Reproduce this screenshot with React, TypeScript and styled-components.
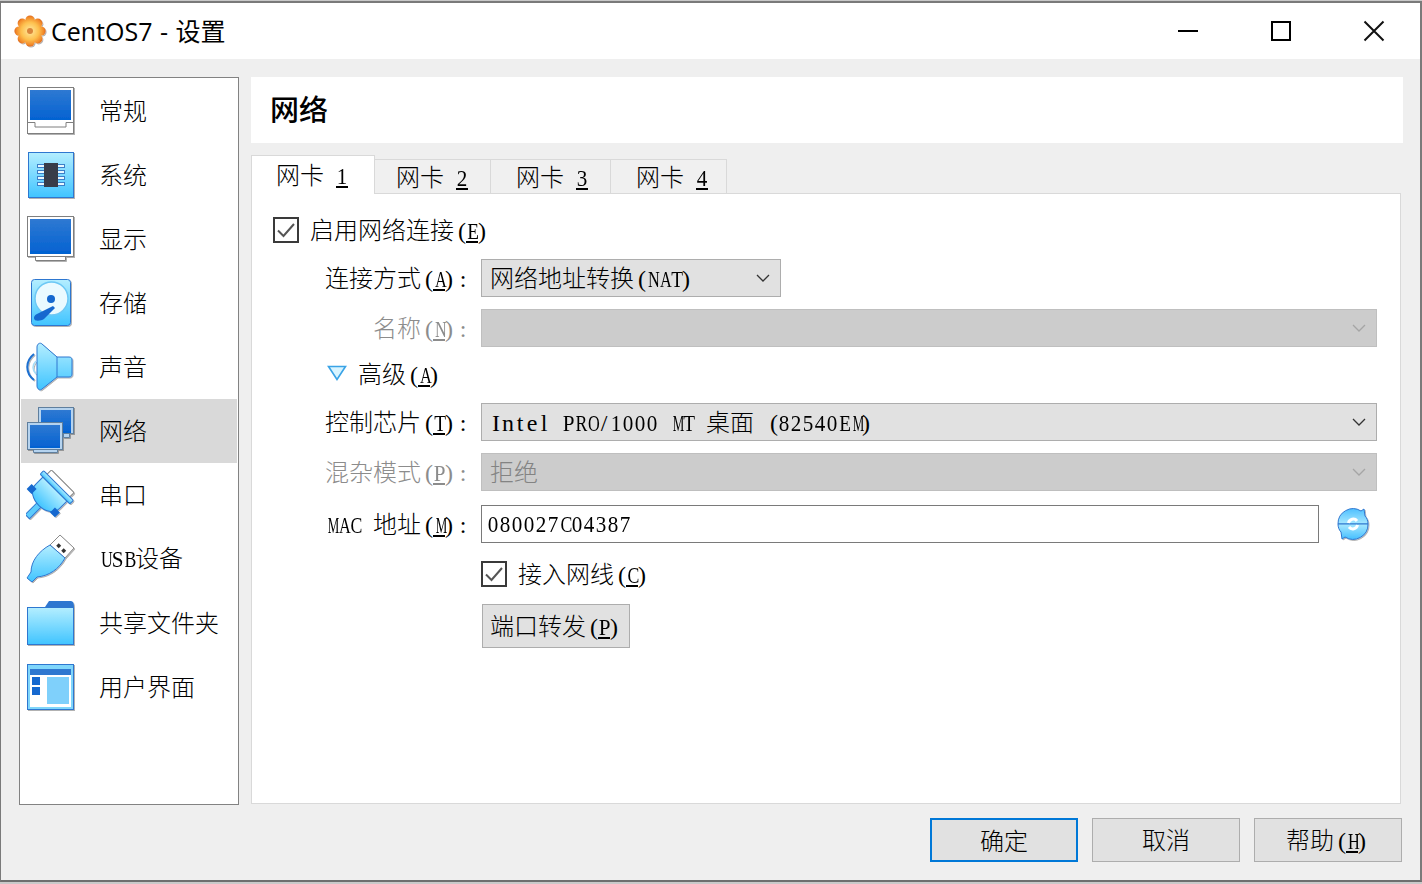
import React from 'react';
import styled, { createGlobalStyle } from 'styled-components';

const BLUE_DARK = '#2f77d0';

const GlobalStyle = createGlobalStyle`
  html, body {
    margin: 0;
    padding: 0;
    background: #c9c9c9;
  }
  body {
    padding-top: 1px;
    font-family: "Noto Sans CJK SC", "Liberation Sans", sans-serif;
    font-weight: 300;
    color: #000;
  }
`;

const Window = styled.div`
  width: 1422px;
  height: 881px;
  box-sizing: border-box;
  border-top: 2px solid #7a7a7a;
  border-left: 1px solid #7a7a7a;
  border-right: 2px solid #7a7a7a;
  border-bottom: 2px solid #6e6e6e;
  background: #efefef;
  display: flex;
  flex-direction: column;
  overflow: hidden;
`;

const TitleBar = styled.div`
  height: 56px;
  flex: none;
  background: #fff;
  display: flex;
  align-items: center;
  padding-left: 12px;
`;

const TitleText = styled.div`
  margin-left: 4px;
  font-size: 25px;
  font-weight: 400;
  word-spacing: 1px;
  font-family: "Open Sans", "Noto Sans CJK SC", sans-serif;
  line-height: 54px;
  flex: 1;
`;

const WinButton = styled.div`
  width: 93px;
  height: 56px;
  display: flex;
  align-items: center;
  justify-content: center;
`;

const Body = styled.div`
  flex: 1;
  min-height: 0;
  display: flex;
  padding: 18px 17px 0 18px;
  gap: 12px;
`;

const Sidebar = styled.div`
  width: 220px;
  height: 728px;
  flex: none;
  box-sizing: border-box;
  border: 1px solid #828282;
  background: #fff;
  padding: 1px;
  display: flex;
  flex-direction: column;
`;

const NavItem = styled.div<{ $active?: boolean }>`
  height: 64px;
  flex: none;
  display: flex;
  align-items: center;
  background: ${(p) => (p.$active ? '#d9d9d9' : 'transparent')};
`;

const NavIcon = styled.div`
  width: 78px;
  padding-left: 5px;
  box-sizing: border-box;
  display: flex;
  align-items: center;
  flex: none;
`;

const NavLabel = styled.div`
  font-size: 24px;
  line-height: 30px;
  margin-top: -2px;
  white-space: pre;
`;

const Main = styled.div`
  flex: 1;
  min-width: 0;
  display: flex;
  flex-direction: column;
`;

const Header = styled.div`
  height: 66px;
  flex: none;
  background: #fff;
  padding-left: 19px;
  font-size: 29px;
  font-weight: 500;
  line-height: 62px;
`;

const Tabs = styled.div`
  margin-top: 12px;
  height: 38px;
  flex: none;
  display: flex;
  align-items: flex-end;
  position: relative;
  z-index: 1;
`;

const Tab = styled.div<{ $active?: boolean; $width: number; $pad: number }>`
  box-sizing: border-box;
  width: ${(p) => p.$width}px;
  height: ${(p) => (p.$active ? '39px' : '34px')};
  margin-bottom: ${(p) => (p.$active ? '-1px' : '0')};
  border: 1px solid #d9d9d9;
  border-left-width: ${(p) => (p.$active ? '1px' : '0')};
  border-bottom-width: 0;
  background: ${(p) => (p.$active ? '#fff' : '#f0f0f0')};
  padding-left: ${(p) => p.$pad}px;
  font-size: 24px;
  line-height: ${(p) => (p.$active ? '35px' : '32px')};
  white-space: pre;
`;

const Panel = styled.div`
  width: 1150px;
  height: 611px;
  box-sizing: border-box;
  flex: none;
  background: #fff;
  border: 1px solid #d9d9d9;
  padding: 20px 0 0 21px;
`;

const Cell = styled.span<{ $sx: number; $align: string }>`
  display: inline-block;
  width: 12px;
  text-align: ${(p) => p.$align};
  font-family: "Liberation Serif", serif;
  font-size: 24px;
  white-space: pre;
  transform: scaleX(${(p) => p.$sx});
`;

const KeyBox = styled.span`
  display: inline-block;
  position: relative;
  line-height: 24px;
  &::after {
    content: '';
    position: absolute;
    left: 0;
    right: 0;
    bottom: 0;
    height: 2px;
    background: currentColor;
  }
`;

const CheckRow = styled.div`
  display: flex;
  align-items: center;
  height: 32px;
  gap: 11px;
  font-size: 24px;
`;

const RowText = styled.span`
  margin-top: -3px;
  white-space: pre;
`;

const CheckBox = styled.div`
  width: 26px;
  height: 26px;
  box-sizing: border-box;
  border: 2px solid #3a3a3a;
  display: flex;
  align-items: center;
  justify-content: center;
`;

const FormGrid = styled.div`
  margin-top: 13px;
  display: grid;
  grid-template-columns: 196px 838px 46px;
  column-gap: 12px;
`;

const FieldLabel = styled.div<{ $muted?: boolean }>`
  grid-column: 1;
  height: 38px;
  font-size: 24px;
  line-height: 35px;
  text-align: right;
  white-space: pre;
  color: ${(p) => (p.$muted ? '#8c8c8c' : '#000')};
`;

const Select = styled.div<{ $disabled?: boolean; $width?: number }>`
  grid-column: 2 / span 2;
  box-sizing: border-box;
  height: 38px;
  width: ${(p) => (p.$width ? `${p.$width}px` : '896px')};
  background: ${(p) => (p.$disabled ? '#cccccc' : '#e1e1e1')};
  border: 1px solid ${(p) => (p.$disabled ? '#bfbfbf' : '#adadad')};
  color: ${(p) => (p.$disabled ? '#838383' : '#000')};
  display: flex;
  align-items: center;
  justify-content: space-between;
  padding: 0 9px 0 8px;
  font-size: 24px;
  white-space: pre;
`;

const RowGap = styled.div<{ $h: number }>`
  grid-column: 1 / span 3;
  height: ${(p) => p.$h}px;
`;

const Advanced = styled.div`
  grid-column: 1 / span 3;
  height: 32px;
  display: flex;
  align-items: center;
  gap: 11px;
  padding-left: 54px;
  font-size: 24px;
`;

const MacInput = styled.div`
  grid-column: 2;
  box-sizing: border-box;
  height: 38px;
  border: 1px solid #7a7a7a;
  padding-left: 5px;
  display: flex;
  align-items: center;
`;

const MacAction = styled.div`
  grid-column: 3;
  display: flex;
  align-items: center;
  padding-left: 4px;
`;

const FieldSlot = styled.div`
  grid-column: 2 / span 2;
`;

const ForwardButton = styled.div`
  box-sizing: border-box;
  width: 148px;
  height: 44px;
  margin-left: 1px;
  background: #e1e1e1;
  border: 1px solid #adadad;
  font-size: 24px;
  line-height: 39px;
  padding-left: 7px;
  white-space: pre;
`;

const Footer = styled.div`
  flex: none;
  height: 76px;
  display: flex;
  justify-content: flex-end;
  gap: 14px;
  padding: 14px 18px 0 0;
  box-sizing: border-box;
`;

const FootButton = styled.div<{ $primary?: boolean }>`
  box-sizing: border-box;
  width: 148px;
  height: 44px;
  background: #e1e1e1;
  border: ${(p) => (p.$primary ? '2px solid #0078d7' : '1px solid #adadad')};
  font-size: 24px;
  line-height: 39px;
  text-align: center;
  white-space: pre;
`;

// Latin glyphs of the reference sit in half-width cells, so squeeze the wide capitals to fit
const SQUEEZE: Record<string, number> = {
  M: 0.54, A: 0.68, N: 0.68, T: 0.8, E: 0.8, P: 0.88, C: 0.74, H: 0.68, U: 0.68, S: 0.88, B: 0.74, R: 0.74, O: 0.68,
  '0': 0.88, '1': 0.88, '2': 0.88, '3': 0.88, '4': 0.88, '5': 0.88, '7': 0.88, '8': 0.88,
};

const cellAlign = (ch: string) => (ch === '(' ? 'right' : ch === ')' ? 'left' : 'center');

const Latin = ({ children }: { children: string }) => (
  <>
    {children.split('').map((ch, i) => (
      <Cell key={i} $sx={SQUEEZE[ch] ?? 1} $align={cellAlign(ch)}>{ch}</Cell>
    ))}
  </>
);

const Key = ({ children }: { children: string }) => (
  <KeyBox><Latin>{children}</Latin></KeyBox>
);

const Shortcut = ({ k }: { k: string }) => (
  <><Latin>(</Latin><Key>{k}</Key><Latin>)</Latin></>
);

const Defs = () => (
  <svg width="0" height="0" style={{ position: 'absolute' }}>
    <defs>
      <linearGradient id="sky" x1="0" y1="0" x2="0" y2="1">
        <stop offset="0" stopColor="#b4eeff" />
        <stop offset="1" stopColor="#40c4ff" />
      </linearGradient>
      <linearGradient id="deep" x1="0" y1="0" x2="0" y2="1">
        <stop offset="0" stopColor="#2f79d2" />
        <stop offset="1" stopColor="#0362d2" />
      </linearGradient>
      <linearGradient id="refreshTop" x1="0" y1="0" x2="0" y2="1">
        <stop offset="0" stopColor="#4fc0ff" />
        <stop offset="1" stopColor="#a8e8ff" />
      </linearGradient>
      <linearGradient id="refreshBottom" x1="0" y1="0" x2="0" y2="1">
        <stop offset="0" stopColor="#a8e8ff" />
        <stop offset="1" stopColor="#45bfff" />
      </linearGradient>
      <radialGradient id="gear" gradientUnits="userSpaceOnUse" cx="17" cy="17" r="16">
        <stop offset="0" stopColor="#ffe9a0" />
        <stop offset="0.55" stopColor="#fdc04e" />
        <stop offset="0.85" stopColor="#f28a2b" />
        <stop offset="1" stopColor="#d9621c" />
      </radialGradient>
      <filter id="soft" x="-10%" y="-10%" width="130%" height="130%">
        <feDropShadow dx="1" dy="1" stdDeviation="0.6" floodColor="#000" floodOpacity="0.3" />
      </filter>
    </defs>
  </svg>
);

const Ico = ({ children }: { children: React.ReactNode }) => (
  <svg width="50" height="50" viewBox="1 1 50 50">
    <g filter="url(#soft)">{children}</g>
  </svg>
);

const GeneralIcon = () => (
  <Ico>
    <rect x="2.5" y="2.5" width="46" height="46" fill="#fff" stroke="#7f7f7f" />
    <rect x="5" y="5" width="41" height="30" fill="url(#deep)" />
    <path d="M3 37.5h7v4.5h31v-4.5h7" fill="none" stroke="#7f7f7f" />
  </Ico>
);

const SystemIcon = () => (
  <Ico>
    <rect x="3.5" y="3.5" width="45" height="45" fill="url(#sky)" stroke={BLUE_DARK} />
    <g fill="#e9f8ff" stroke="#3a7fc8" strokeWidth="1">
      <rect x="12.5" y="15.5" width="27" height="3" />
      <rect x="12.5" y="21.5" width="27" height="3" />
      <rect x="12.5" y="27.5" width="27" height="3" />
      <rect x="12.5" y="33.5" width="27" height="3" />
    </g>
    <rect x="19" y="14" width="14" height="24" fill="#373d4a" />
  </Ico>
);

const DisplayIcon = () => (
  <Ico>
    <path d="M10.5 43v4.5h30V43" fill="#fff" stroke="#7f7f7f" />
    <rect x="2.5" y="3.5" width="46" height="40" fill="#fff" stroke="#7f7f7f" />
    <rect x="5" y="6" width="41" height="35" fill="url(#deep)" />
  </Ico>
);

const StorageIcon = () => (
  <Ico>
    <rect x="6.5" y="2.5" width="39" height="46" rx="3" fill="url(#sky)" stroke={BLUE_DARK} />
    <circle cx="26.5" cy="21.5" r="16.5" fill="#eafaff" stroke="#6cc8f5" strokeWidth="1.5" />
    <circle cx="26" cy="22" r="4" fill="#1268cf" />
    <path d="M9 41c0-2 1-3 3-4l16-8 2 2-11 11c-3 2-10 3-10-1z" fill="#1268cf" />
  </Ico>
);

const SoundIcon = () => (
  <Ico>
    <path d="M12 6c0-3 3-5 5-3l15 13h12c2 0 3 1 3 3v14c0 2-1 3-3 3H32L17 48c-2 2-5 0-5-3z" fill="url(#sky)" stroke={BLUE_DARK} />
    <path d="M32 16v20" stroke={BLUE_DARK} fill="none" />
    <path d="M9 13C0 20 0 32 9 39" fill="none" stroke="#1d6fd0" strokeWidth="2" />
    <path d="M11 20c-4 4-4 9 0 13" fill="none" stroke="#a5dcf7" strokeWidth="1.5" />
  </Ico>
);

const NetworkIcon = () => (
  <Ico>
    <path d="M38.5 28v4.5h6V28" fill="#b5d3ef" stroke="#5e7f9e" />
    <rect x="13.5" y="2.5" width="35" height="26" fill="#b5d3ef" stroke="#5e7f9e" />
    <rect x="16" y="5" width="30" height="23" fill="url(#deep)" />
    <path d="M8.5 44v3.5h24V44" fill="#b5d3ef" stroke="#5e7f9e" />
    <rect x="2.5" y="17.5" width="35" height="27" fill="#b5d3ef" stroke="#5e7f9e" />
    <rect x="5" y="20" width="30" height="23" fill="url(#deep)" />
  </Ico>
);

const SerialIcon = () => (
  <Ico>
    <g transform="translate(25 25) rotate(45)">
      <rect x="-16" y="-18" width="32" height="7" rx="1" fill="#fff" stroke="#8a8a8a" />
      <rect x="-3" y="12" width="6" height="20" fill="#5ccbfc" stroke={BLUE_DARK} />
      <path d="M-17-7H17V3C17 12 8 16 0 16S-17 12-17 3z" fill="url(#sky)" stroke={BLUE_DARK} />
      <rect x="-21" y="-12" width="42" height="5" rx="1" fill="url(#sky)" stroke={BLUE_DARK} />
      <rect x="-20" y="6" width="7" height="7" fill="#1268cf" />
      <rect x="13" y="6" width="7" height="7" fill="#1268cf" />
    </g>
  </Ico>
);

const UsbIcon = () => (
  <Ico>
    <path d="M35 2l14 13-9 10L25 12z" fill="#fff" stroke="#8a8a8a" />
    <rect x="32" y="11" width="3.5" height="3.5" fill="#333" transform="rotate(45 33.7 12.7)" />
    <rect x="37" y="16" width="3.5" height="3.5" fill="#333" transform="rotate(45 38.7 17.7)" />
    <path d="M25 12l15 13C34 36 24 43 12 44l-5 5-5-4 4-6C6 28 14 18 25 12z" fill="url(#sky)" stroke={BLUE_DARK} />
  </Ico>
);

const FolderIcon = () => (
  <Ico>
    <path d="M20 10l4-6h22c2 0 3 2 3 6z" fill={BLUE_DARK} />
    <rect x="2.5" y="10.5" width="46" height="37" fill="url(#sky)" stroke={BLUE_DARK} />
  </Ico>
);

const UiIcon = () => (
  <Ico>
    <rect x="2.5" y="3.5" width="46" height="45" fill="#7fd6fb" stroke={BLUE_DARK} />
    <rect x="5" y="8" width="41" height="38" fill="#fff" />
    <rect x="5" y="8" width="41" height="6" fill={BLUE_DARK} />
    <rect x="7" y="16" width="8" height="8" fill="#1268cf" />
    <rect x="7" y="26" width="8" height="8" fill="#1268cf" />
    <rect x="22" y="16" width="22" height="27" fill="#7fd0fb" />
  </Ico>
);

const GEAR_ANGLES = [0, 45, 90, 135, 180, 225, 270, 315];

const GearIcon = () => (
  <svg width="34" height="34" viewBox="0 0 34 34">
    <g filter="url(#soft)">
      <g fill="url(#gear)">
        <circle cx="17" cy="17" r="12" />
        {GEAR_ANGLES.map((a) => (
          <circle key={a} cx="17" cy="6" r="4.6" transform={`rotate(${a} 17 17)`} />
        ))}
      </g>
      <circle cx="17" cy="17" r="3" fill="#d9853a" />
    </g>
  </svg>
);

const Chevron = ({ color = '#333' }: { color?: string }) => (
  <svg width="16" height="16" viewBox="0 0 16 16">
    <path d="M2 5l6 6 6-6" fill="none" stroke={color} strokeWidth="1.3" />
  </svg>
);

const Tick = () => (
  <svg width="20" height="20" viewBox="0 0 20 20">
    <path d="M2 10.5l5.5 5.5L18 4" fill="none" stroke="#555" strokeWidth="2" />
  </svg>
);

const TriangleIcon = () => (
  <svg width="20" height="16" viewBox="0 0 20 16" style={{ marginBottom: 2 }}>
    <path d="M1.5 1.5h17L10 14.5z" fill="#d8f4ff" stroke="#3aa3e6" strokeWidth="1.6" />
  </svg>
);

const RefreshIcon = () => (
  <svg width="36" height="36" viewBox="0 0 36 36">
    <g filter="url(#soft)">
      <path d="M3 18A15 15 0 0 1 26 5l3-2 1 7c2 2 3 5 3 8z" fill="url(#refreshTop)" stroke={BLUE_DARK} />
      <path d="M33 18A15 15 0 0 1 10 31l-3 2-1-7c-2-2-3-5-3-8z" fill="url(#refreshBottom)" stroke={BLUE_DARK} />
      <path d="M13.5 17a4.8 4.8 0 0 1 8.5-2M22.5 19a4.8 4.8 0 0 1-8.5 2" fill="none" stroke="#fff" strokeWidth="3" />
    </g>
  </svg>
);

const navItems: { label: React.ReactNode; icon: React.ReactNode; active?: boolean }[] = [
  { label: '常规', icon: <GeneralIcon /> },
  { label: '系统', icon: <SystemIcon /> },
  { label: '显示', icon: <DisplayIcon /> },
  { label: '存储', icon: <StorageIcon /> },
  { label: '声音', icon: <SoundIcon /> },
  { label: '网络', icon: <NetworkIcon />, active: true },
  { label: '串口', icon: <SerialIcon /> },
  { label: <><Latin>USB</Latin>设备</>, icon: <UsbIcon /> },
  { label: '共享文件夹', icon: <FolderIcon /> },
  { label: '用户界面', icon: <UiIcon /> },
];

const tabs = [
  { key: '1', width: 124, pad: 24, active: true },
  { key: '2', width: 116, pad: 21 },
  { key: '3', width: 120, pad: 25 },
  { key: '4', width: 116, pad: 25 },
];

export default function App() {
  return (
    <>
      <GlobalStyle />
      <Defs />
      <Window>
        <TitleBar>
          <GearIcon />
          <TitleText>CentOS7 - 设置</TitleText>
          <WinButton>
            <svg width="22" height="22" viewBox="0 0 22 22"><path d="M1 11h20" stroke="#000" strokeWidth="2" /></svg>
          </WinButton>
          <WinButton>
            <svg width="22" height="22" viewBox="0 0 22 22"><rect x="2" y="2" width="18" height="18" fill="none" stroke="#000" strokeWidth="2" /></svg>
          </WinButton>
          <WinButton>
            <svg width="22" height="22" viewBox="0 0 22 22"><path d="M1.5 1.5l19 19M20.5 1.5l-19 19" stroke="#111" strokeWidth="2" /></svg>
          </WinButton>
        </TitleBar>
        <Body>
          <Sidebar>
            {navItems.map((item, i) => (
              <NavItem key={i} $active={item.active}>
                <NavIcon>{item.icon}</NavIcon>
                <NavLabel>{item.label}</NavLabel>
              </NavItem>
            ))}
          </Sidebar>
          <Main>
            <Header>网络</Header>
            <Tabs>
              {tabs.map((t) => (
                <Tab key={t.key} $active={t.active} $width={t.width} $pad={t.pad}>
                  网卡<Latin> </Latin><Key>{t.key}</Key>
                </Tab>
              ))}
            </Tabs>
            <Panel>
              <CheckRow>
                <CheckBox><Tick /></CheckBox>
                <RowText>启用网络连接<Shortcut k="E" /></RowText>
              </CheckRow>
              <FormGrid>
                <FieldLabel>连接方式<Shortcut k="A" /><Latin>:</Latin></FieldLabel>
                <Select $width={300}>
                  <RowText>网络地址转换<Latin>(NAT)</Latin></RowText>
                  <Chevron />
                </Select>
                <RowGap $h={12} />
                <FieldLabel $muted>名称<Shortcut k="N" /><Latin>:</Latin></FieldLabel>
                <Select $disabled>
                  <span />
                  <Chevron color="#a5a5a5" />
                </Select>
                <RowGap $h={11} />
                <Advanced>
                  <TriangleIcon />
                  <RowText>高级<Shortcut k="A" /></RowText>
                </Advanced>
                <RowGap $h={13} />
                <FieldLabel>控制芯片<Shortcut k="T" /><Latin>:</Latin></FieldLabel>
                <Select>
                  <RowText><Latin>Intel PRO/1000 MT </Latin>桌面<Latin> (82540EM)</Latin></RowText>
                  <Chevron />
                </Select>
                <RowGap $h={12} />
                <FieldLabel $muted>混杂模式<Shortcut k="P" /><Latin>:</Latin></FieldLabel>
                <Select $disabled>
                  <RowText>拒绝</RowText>
                  <Chevron color="#a5a5a5" />
                </Select>
                <RowGap $h={14} />
                <FieldLabel><Latin>MAC </Latin>地址<Shortcut k="M" /><Latin>:</Latin></FieldLabel>
                <MacInput><Latin>080027C04387</Latin></MacInput>
                <MacAction><RefreshIcon /></MacAction>
                <RowGap $h={15} />
                <FieldSlot>
                  <CheckRow>
                    <CheckBox><Tick /></CheckBox>
                    <RowText>接入网线<Shortcut k="C" /></RowText>
                  </CheckRow>
                </FieldSlot>
                <RowGap $h={14} />
                <FieldSlot>
                  <ForwardButton>端口转发<Shortcut k="P" /></ForwardButton>
                </FieldSlot>
              </FormGrid>
            </Panel>
          </Main>
        </Body>
        <Footer>
          <FootButton $primary>确定</FootButton>
          <FootButton>取消</FootButton>
          <FootButton>帮助<Shortcut k="H" /></FootButton>
        </Footer>
      </Window>
    </>
  );
}
